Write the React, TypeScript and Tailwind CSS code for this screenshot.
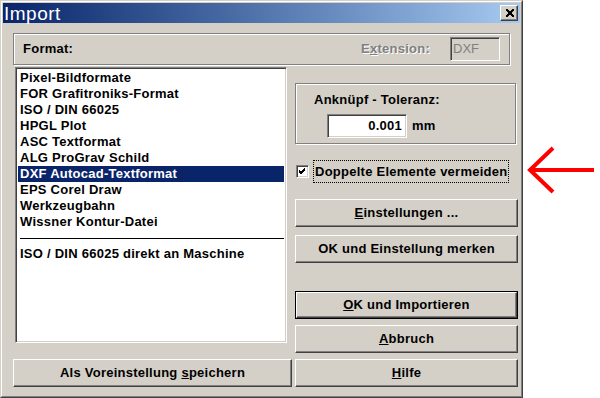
import type { ReactNode } from 'react';

const FONT = { fontFamily: '"Liberation Sans", Arial, sans-serif' };

const raised =
  'border border-t-white border-l-white border-r-[#404040] border-b-[#404040] shadow-[inset_-1px_-1px_0_#808080]';
const sunken =
  'border border-t-[#808080] border-l-[#808080] border-r-white border-b-white shadow-[inset_1px_1px_0_#404040,inset_-1px_-1px_0_#d4d0c8]';
const etched = 'border border-[#808080] shadow-[inset_1px_1px_0_#fff,1px_1px_0_#fff]';

const formats = [
  'Pixel-Bildformate',
  'FOR Grafitroniks-Format',
  'ISO / DIN 66025',
  'HPGL Plot',
  'ASC Textformat',
  'ALG ProGrav Schild',
  'DXF Autocad-Textformat',
  'EPS Corel Draw',
  'Werkzeugbahn',
  'Wissner Kontur-Datei',
];

function Button({ children, isDefault, className = '' }: { children: ReactNode; isDefault?: boolean; className?: string }) {
  const face = (
    <div className={`${raised} flex h-full w-full items-center justify-center bg-[#d4d0c8] text-[13px] font-bold text-black`}>
      {children}
    </div>
  );
  if (isDefault) {
    return <div className={`h-[28px] border border-black ${className}`}>{face}</div>;
  }
  return <div className={`h-[28px] ${className}`}>{face}</div>;
}

export default function App() {
  return (
    <div className="flex h-[398px] w-[600px] bg-white tracking-[0.25px]" style={FONT}>
      {/* Dialog window */}
      <div className="h-[398px] w-[523px] border border-t-[#d4d0c8] border-l-[#d4d0c8] border-r-[#404040] border-b-[#404040]">
        <div className="flex h-full flex-col border border-t-white border-l-white border-r-[#808080] border-b-[#808080] bg-[#d4d0c8] p-px">
          {/* Title bar */}
          <div className="flex h-[20px] items-center justify-between bg-linear-to-r from-[#0a246a] to-[#a6caf0] pl-[1px] pr-[2px]">
            <span className="text-[19px] leading-none tracking-[0.5px] text-white">Import</span>
            <div className={`${raised} flex h-[16px] w-[18px] items-center justify-center bg-[#d4d0c8]`}>
              <svg width="9" height="8" viewBox="0 0 9 8">
                <path d="M1 0.5 L8 7.5 M2 0.5 L9 7.5 M8 0.5 L1 7.5 M9 0.5 L2 7.5" stroke="#000" strokeWidth="1" shapeRendering="crispEdges" />
              </svg>
            </div>
          </div>

          {/* Format row */}
          <div className={`${etched} ml-[10px] mt-[10px] flex h-[32px] w-[497px] items-center`}>
            <span className="ml-[9px] text-[13px] font-bold text-black">Format:</span>
            <span className="ml-auto text-[13px] font-bold text-[#808080] [text-shadow:1px_1px_0_#fff]">
              E<span className="underline">x</span>tension:
            </span>
            <div className={`${sunken} ml-[20px] mr-[9px] flex h-[24px] w-[50px] items-center px-[2px] text-[13px] tracking-normal text-[#808080]`}>
              DXF
            </div>
          </div>

          <div className="flex">
            {/* Left column */}
            <div className="flex w-[292px] flex-col">
              <div className={`${sunken} ml-[12px] mt-[2px] h-[276px] w-[272px] bg-white p-[2px]`}>
                {formats.map((f) => (
                  <div
                    key={f}
                    className={`h-[16px] pl-[2px] text-[13px] font-bold leading-[16px] ${
                      f.startsWith('DXF') ? 'bg-[#0a246a] text-white' : 'text-black'
                    }`}
                  >
                    {f}
                  </div>
                ))}
                <div className="flex h-[16px] items-center pl-[2px]">
                  <div className="h-px w-full bg-black" />
                </div>
                <div className="h-[16px] pl-[2px] text-[13px] font-bold leading-[16px] text-black">
                  ISO / DIN 66025 direkt an Maschine
                </div>
              </div>
              <Button className="ml-[10px] mt-[16px] w-[279px]">
                Als Voreinstellung&nbsp;<span className="underline">s</span>peichern
              </Button>
            </div>

            {/* Right column */}
            <div className="flex w-[223px] flex-col">
              <div className={`${etched} mt-[18px] h-[61px] w-[221px] pl-[18px] pt-[8px]`}>
                <div className="text-[13px] font-bold leading-[16px] text-black">Anknüpf - Toleranz:</div>
                <div className="mt-[6px] flex items-center">
                  <div className={`${sunken} ml-[13px] flex h-[24px] w-[80px] items-center justify-end bg-white pr-[4px] text-[13px] font-bold text-black`}>
                    0.001
                  </div>
                  <span className="ml-[5px] text-[13px] font-bold text-black">mm</span>
                </div>
              </div>

              <div className="mt-[16px] flex h-[23px] items-center">
                <div className={`${sunken} ml-[1px] flex h-[13px] w-[13px] items-center justify-center bg-white`}>
                  <svg width="7" height="7" viewBox="0 0 7 7">
                    <path d="M0 2 L2 4 L6 0 M0 3 L2 5 L6 1 M0 4 L2 6 L6 2" stroke="#000" strokeWidth="1" fill="none" />
                  </svg>
                </div>
                <div className="ml-[4px] flex h-[23px] items-center border border-dotted border-black px-[1px] text-[13px] font-bold text-black">
                  Doppelte Elemente vermeiden
                </div>
              </div>

              <Button className="mt-[16px] w-[223px]">
                <span className="underline">E</span>instellungen ...
              </Button>
              <Button className="mt-[8px] w-[223px]">OK und Einstellung merken</Button>
              <Button isDefault className="mt-[28px] w-[223px]">
                <span className="underline">O</span>K und Importieren
              </Button>
              <Button className="mt-[6px] w-[223px]">
                <span className="underline">A</span>bbruch
              </Button>
              <Button className="mt-[6px] w-[223px]">
                <span className="underline">H</span>ilfe
              </Button>
            </div>
          </div>
        </div>
      </div>

      {/* Annotation arrow */}
      <div className="flex-1">
        <svg className="ml-[3px] mt-[145px]" width="72" height="50" viewBox="0 0 72 50">
          <path d="M4 25 L68 25 M27 3 L4 25 L27 47" stroke="#ff0000" strokeWidth="4" fill="none" />
        </svg>
      </div>
    </div>
  );
}
